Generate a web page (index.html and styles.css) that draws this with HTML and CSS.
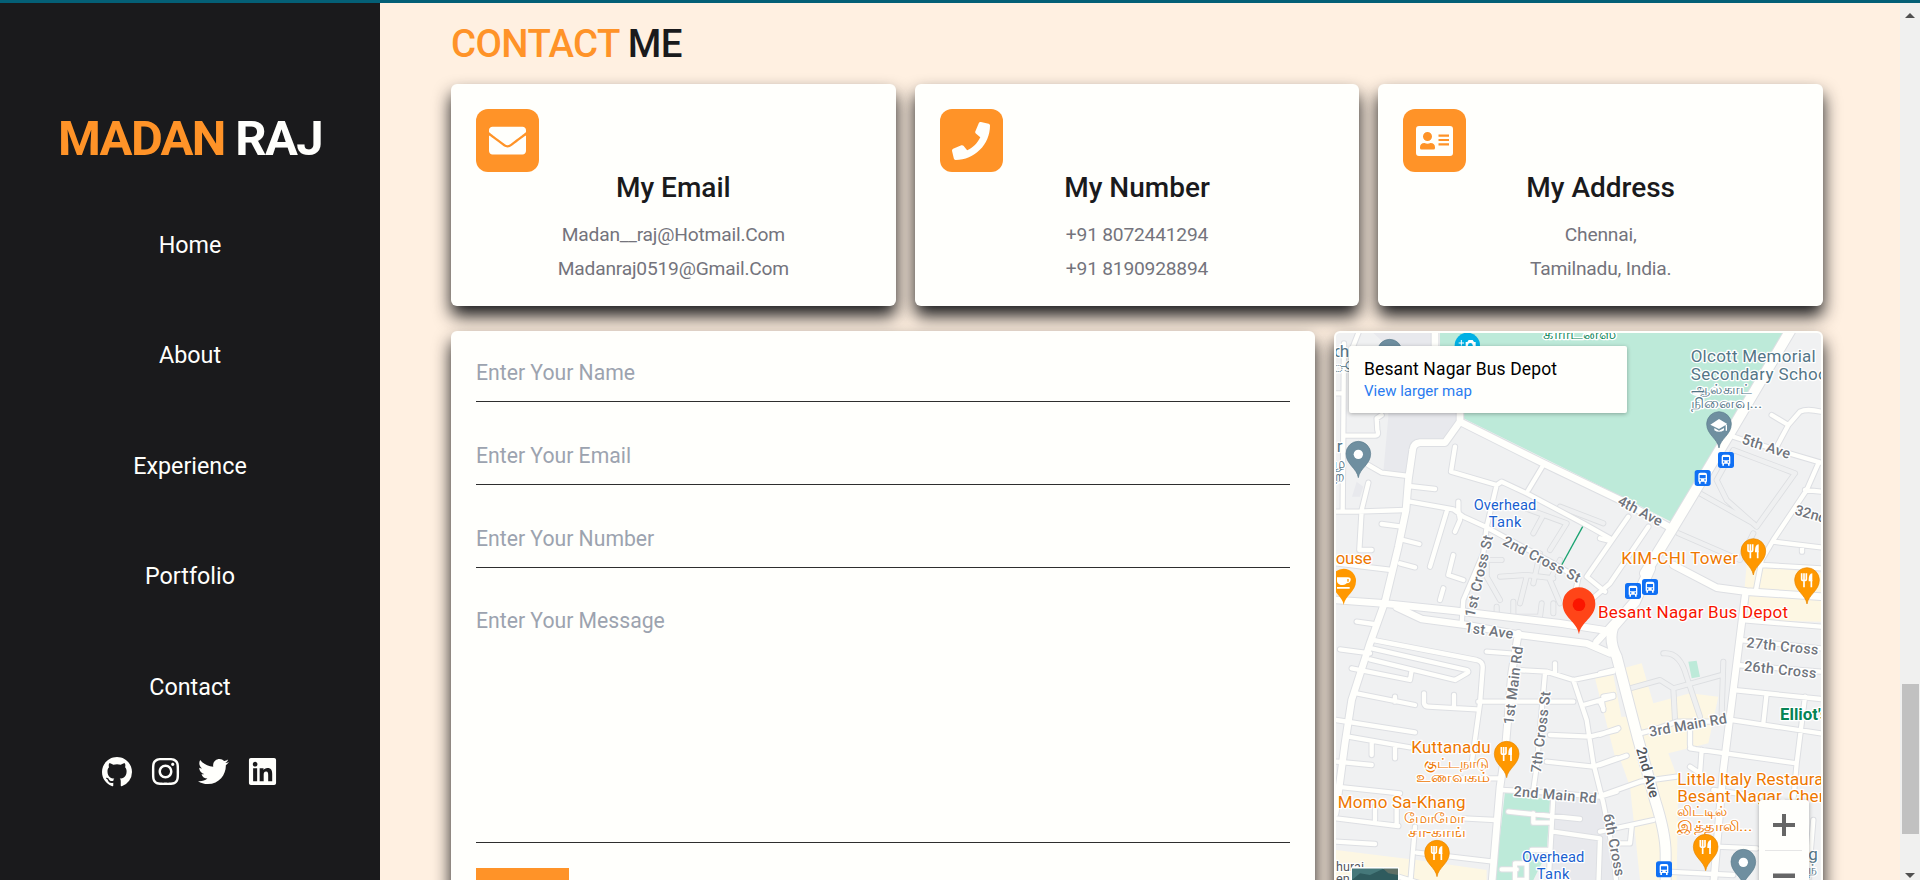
FILE: index.html
```html
<!DOCTYPE html>
<html lang="en">
<head>
<meta charset="utf-8">
<title>Madan Raj</title>
<link rel="stylesheet" href="styles.css">
</head>
<body>
<div class="page">
  <aside class="sidebar">
    <h1 class="logo"><span class="accent">MADAN</span> RAJ</h1>
    <nav class="nav">
      <a>Home</a><a>About</a><a>Experience</a><a>Portfolio</a><a>Contact</a>
    </nav>
    <div class="social">
      <svg width="30" height="30" viewBox="0 0 16 16"><path d="M8 0C3.58 0 0 3.58 0 8c0 3.54 2.29 6.53 5.47 7.59.4.07.55-.17.55-.38 0-.19-.01-.82-.01-1.49-2.01.37-2.53-.49-2.69-.94-.09-.23-.48-.94-.82-1.13-.28-.15-.68-.52-.01-.53.63-.01 1.08.58 1.23.82.72 1.21 1.87.87 2.33.66.07-.52.28-.87.51-1.07-1.78-.2-3.64-.89-3.64-3.95 0-.87.31-1.59.82-2.15-.08-.2-.36-1.02.08-2.12 0 0 .67-.21 2.2.82.64-.18 1.32-.27 2-.27s1.36.09 2 .27c1.53-1.04 2.2-.82 2.2-.82.44 1.1.16 1.92.08 2.12.51.56.82 1.27.82 2.15 0 3.07-1.87 3.75-3.65 3.95.29.25.54.73.54 1.48 0 1.07-.01 1.93-.01 2.2 0 .21.15.46.55.38A8.01 8.01 0 0 0 16 8c0-4.42-3.58-8-8-8z"/></svg>
      <svg width="31" height="31" viewBox="0 0 448 512"><path d="M224.100 141c-63.600 0-114.900 51.300-114.900 114.900s51.300 114.900 114.900 114.900S339 319.500 339 255.900 287.700 141 224.100 141zm0 189.600c-41.100 0-74.700-33.500-74.700-74.700s33.500-74.700 74.700-74.700 74.700 33.500 74.700 74.700-33.600 74.700-74.700 74.700zm146.400-194.300c0 14.900-12 26.800-26.800 26.800-14.900 0-26.800-12-26.800-26.800s12-26.800 26.800-26.800 26.800 12 26.800 26.800zm76.100 27.200c-1.700-35.900-9.900-67.700-36.200-93.900-26.200-26.200-58-34.400-93.900-36.200-37-2.100-147.900-2.100-184.900 0-35.800 1.700-67.600 9.900-93.900 36.100s-34.400 58-36.200 93.900c-2.100 37-2.100 147.900 0 184.900 1.700 35.900 9.900 67.700 36.200 93.900s58 34.400 93.900 36.200c37 2.100 147.900 2.100 184.900 0 35.900-1.700 67.700-9.900 93.900-36.200 26.200-26.200 34.400-58 36.200-93.900 2.100-37 2.100-147.800 0-184.800zM398.800 388c-7.800 19.600-22.900 34.700-42.600 42.600-29.500 11.700-99.500 9-132.100 9s-102.700 2.600-132.100-9c-19.600-7.800-34.700-22.900-42.600-42.600-11.700-29.500-9-99.500-9-132.100s-2.600-102.700 9-132.100c7.800-19.600 22.900-34.700 42.600-42.600 29.500-11.700 99.500-9 132.100-9s102.700-2.600 132.100 9c19.600 7.800 34.700 22.900 42.600 42.600 11.700 29.500 9 99.500 9 132.100s2.700 102.700-9 132.100z"/></svg>
      <svg width="31" height="31" viewBox="0 0 512 512"><path d="M459.370 151.716c.325 4.548.325 9.097.325 13.645 0 138.720-105.583 298.558-298.558 298.558-59.452 0-114.680-17.219-161.137-47.106 8.447.974 16.568 1.299 25.340 1.299 49.055 0 94.213-16.568 130.274-44.832-46.132-.975-84.792-31.188-98.112-72.772 6.498.974 12.995 1.624 19.818 1.624 9.421 0 18.843-1.300 27.614-3.573-48.081-9.747-84.143-51.980-84.143-102.985v-1.299c13.969 7.797 30.214 12.670 47.431 13.319-28.264-18.843-46.781-51.005-46.781-87.391 0-19.492 5.197-37.360 14.294-52.954 51.655 63.675 129.300 105.258 216.365 109.807-1.624-7.797-2.599-15.918-2.599-24.040 0-57.828 46.782-104.934 104.934-104.934 30.213 0 57.502 12.670 76.670 33.137 23.715-4.548 46.456-13.320 66.599-25.340-7.798 24.366-24.366 44.833-46.132 57.827 21.117-2.273 41.584-8.122 60.426-16.243-14.292 20.791-32.161 39.308-52.628 54.253z"/></svg>
      <svg width="31" height="31" viewBox="0 0 448 512"><path d="M416 32H31.900C14.300 32 0 46.500 0 64.300v383.400C0 465.500 14.300 480 31.900 480H416c17.600 0 32-14.500 32-32.300V64.300c0-17.800-14.400-32.300-32-32.300zM135.400 416H69V202.200h66.500V416zm-33.200-243c-21.300 0-38.500-17.300-38.500-38.500S80.900 96 102.200 96c21.200 0 38.500 17.300 38.500 38.500 0 21.300-17.200 38.500-38.500 38.500zm282.100 243h-66.400V312c0-24.800-.5-56.700-34.500-56.700-34.600 0-39.900 27-39.900 54.900V416h-66.400V202.200h63.700v29.200h.9c8.900-16.800 30.600-34.500 62.900-34.500 67.200 0 79.700 44.300 79.700 101.900V416z"/></svg>
    </div>
  </aside>

  <main class="contact">
    <h2 class="heading"><span class="accent">CONTACT</span> ME</h2>
    <div class="cards">
      <section class="card">
        <div class="badge"><svg width="37" height="37" viewBox="0 0 512 512"><path d="M502.300 190.800c3.900-3.100 9.700-.2 9.700 4.700V400c0 26.500-21.500 48-48 48H48c-26.500 0-48-21.500-48-48V195.600c0-5 5.700-7.800 9.700-4.700 22.400 17.400 52.100 39.500 154.100 113.600 21.100 15.400 56.700 47.800 92.200 47.600 35.700.3 72-32.800 92.300-47.600 102-74.100 131.600-96.300 154-113.700zM256 320c23.200.4 56.600-29.200 73.400-41.400 132.700-96.300 142.800-104.700 173.400-128.700 5.800-4.500 9.200-11.500 9.200-18.900v-19c0-26.500-21.500-48-48-48H48c-26.500 0-48 21.500-48 48v19c0 7.400 3.400 14.300 9.200 18.900 30.600 23.900 40.700 32.400 173.400 128.700 16.800 12.200 50.200 41.800 73.400 41.400z"/></svg></div>
        <h3>My Email</h3><p>Madan__raj@Hotmail.Com</p><p>Madanraj0519@Gmail.Com</p>
      </section>
      <section class="card">
        <div class="badge"><svg width="38" height="38" viewBox="0 0 512 512"><path d="M493.400 24.600l-104-24c-11.300-2.600-22.900 3.300-27.500 13.900l-48 112c-4.200 9.800-1.400 21.300 6.900 28l60.600 49.600c-36 76.700-98.900 140.500-177.200 177.200l-49.600-60.600c-6.800-8.300-18.200-11.100-28-6.900l-112 48C3.900 366.500-2 378.100.6 389.400l24 104C27.100 504.200 36.700 512 48 512c256.100 0 464-207.500 464-464 0-11.200-7.700-20.900-18.600-23.400z"/></svg></div>
        <h3>My Number</h3><p>+91 8072441294</p><p>+91 8190928894</p>
      </section>
      <section class="card">
        <div class="badge"><svg width="37" height="30" viewBox="0 0 37 30"><path fill-rule="evenodd" d="M3 0H34Q37 0 37 3V27Q37 30 34 30H3Q0 30 0 27V3Q0 0 3 0ZM11.500 6A4.500 4.500 0 1 0 11.500 15A4.500 4.500 0 1 0 11.500 6ZM4 21.500Q4 17 8.500 17Q11.500 18.500 14.500 17Q19 17 19 21.500V22Q19 23.500 17.500 23.500H5.500Q4 23.500 4 22ZM22.500 8.500V10.700H33V8.500ZM22.500 13V15H33V13ZM22.500 17.300V19.500H33V17.300Z"/></svg></div>
        <h3>My Address</h3><p>Chennai,</p><p>Tamilnadu, India.</p>
      </section>
    </div>

    <div class="lower">
      <form class="form">
        <input placeholder="Enter Your Name">
        <input placeholder="Enter Your Email">
        <input placeholder="Enter Your Number">
        <textarea placeholder="Enter Your Message"></textarea>
        <button type="button" class="send" aria-label="Send"></button>
      </form>

      <div class="map">
        <svg class="tiles" width="485" height="547" viewBox="48 39 1455 1641">
          <defs>
            <path id="lanes" d="M590 555L740 610L690 690M670 585L640 640M720 560L850 610M545 720H500V770L540 840M620 770L600 850M540 770L620 765L700 775M660 700L640 790M720 720L690 780L720 850M530 860V890M580 845V890H660L665 850M700 850V880M1190 480L1240 390L1425 460M1425 460L1310 620L1220 540M1190 480L1220 540M1075 640L1260 720L1300 640M1140 520L1300 610M930 1105L1020 1080L1060 1105L1205 1065M1060 1105L1065 1200M1030 1000Q1080 995 1100 1070L1140 1190M1210 1025L1205 1180"/>
            <path id="minor" d="M115 39L95 90M72 70L68 570M50 220H70M75 347H165Q178 347 172 330L170 295L185 285M145 435L185 458L265 468M145 488L125 570L118 690H155M48 575H110L255 570M185 612L245 620M265 498L345 507M250 660L298 672M240 730L285 742M48 730L215 750M270 545L400 568L430 590L500 622L560 655L700 730L775 775M405 380L393 455L530 495L545 485L620 520L790 610L870 655M670 435L625 510M530 495L500 620L490 700L430 840L425 910M415 545V570L420 600L405 635M380 575L330 740M400 705L385 765L430 780M370 805L360 840M925 590L800 770L855 815M985 620L870 790L790 860M775 775L760 840M840 655L870 663M1240 350L1270 360L1503 428M1355 285L1405 315L1370 380M1405 315L1440 275Q1460 265 1503 275M1495 430L1460 510L1360 660L1325 720L1308 810M1455 510L1503 515M1360 665L1503 682M1446 680V695M1325 735L1503 745M1265 900L1503 920M1260 960L1503 985M1250 1035L1503 1055M1240 1110L1503 1137M1235 1200L1503 1240M1110 1285L1430 1330M1340 1120L1330 1210M1455 1130L1430 1330L1420 1440M1110 1215V1275Q1110 1285 1125 1287M1145 1290L1140 1360L1110 1340M960 1240L1000 1230L1070 1205H1225M840 1428L960 1385L1070 1370M1180 1410L1320 1430M840 1535L1000 1500M935 1520L930 1570H880M840 1335L920 1307M840 1244L895 1225M850 1130L880 1125M850 1165L840 1145M840 1060L880 1050M1040 1655L1240 1665M1190 1580L1310 1585M1480 1500L1465 1680M110 905L160 912M160 960L470 1020Q490 1025 488 1045L480 1150L455 1330M155 985L440 1050Q450 1055 440 1060L405 1080L150 1018M95 1045L270 1080L275 1050M60 988L150 1000M110 1120L285 1155M225 1130V1145M312 1120V1150Q315 1160 325 1160L470 1168M402 1125V1160M475 1145L760 1145M48 1200L285 1237M85 1250L270 1282M155 1265V1305M225 1275V1315M50 1325L155 1335M48 1400L240 1420M48 1495L235 1518M165 1460V1500M230 1430V1515M48 1565L165 1572M430 1495L525 1500M285 1520L270 1700M290 1598L520 1625M235 1670L300 1690M370 1375H540M500 995L570 1000M590 1050L680 1055L760 1080L880 1055M705 1030V1060M675 1060L650 1340L640 1410M760 1080L800 1200L820 1330L850 1450L880 1600L890 1700M790 1155L880 1130M845 1140L850 1170M690 1245L810 1250L890 1230M680 1325L820 1340L890 1315M545 1410L640 1415L840 1430L890 1415M700 1430L685 1700M565 1475L780 1497M640 1480V1508H690M700 1535L840 1555L835 1700M635 1590H685M545 1648H590M585 1630H620V1680H585Z"/>
            <path id="major" d="M345 39V80M420 240V305L670 430L900 540L1055 625M420 305L375 368H300Q280 370 278 390L265 480L258 570L235 680L195 845L150 970L95 1140L75 1270L55 1420L45 1480M48 840L190 850L400 872L720 910L880 935M230 862L305 897L440 915L600 945L800 970L870 1000M890 900L830 965M595 940L575 1060L555 1300L540 1400L515 1700M1060 735L1190 803L1280 815L1503 830M1275 830L1240 1110L1210 1350L1180 1700"/>
            <path id="trunk" d="M1412 30L1235 330L1055 630L975 760M990 745L945 845L880 920Q865 960 890 1010L955 1260L1005 1440Q1037 1540 1037 1600V1700"/>
          </defs>
          <rect class="land" x="48" y="39" width="1455" height="1641"/>
          <path class="block" d="M160 39H340V80H420V290L375 358H290L262 465L190 455L205 290V80ZM110 485L130 500L120 530H96ZM690 1440L840 1430L880 1680H690Z"/>
          <path class="park" d="M360 39H1398L1225 330L1055 606L900 527L430 295L420 80H360ZM555 1415L690 1440L680 1600L640 1680H525ZM1105 1025L1130 1022L1140 1070L1115 1075Z"/>
          <path class="shops" d="M1280 735L1503 760V905L1265 900ZM825 1075L880 1065L925 1300L885 1310ZM890 1050L965 1030L1000 1150L1110 1120L1195 1130L1165 1270L1045 1300L1075 1380L1070 1680H960L930 1400L855 1190H920ZM48 1590L290 1620L500 1650V1680H48Z"/>
          <use href="#lanes" class="lane-edge"/><use href="#lanes" class="lane"/>
          <use href="#minor" class="minor edge"/><use href="#major" class="major edge"/><use href="#trunk" class="trunk edge"/>
          <use href="#minor" class="minor"/><use href="#major" class="major"/><use href="#trunk" class="trunk"/>
          <path class="trail" d="M788 620L725 735"/>

          <g class="street">
            <text transform="translate(545 673) rotate(27)" textLength="255">2nd Cross St</text>
            <text transform="translate(463 893) rotate(-77)" textLength="250">1st Cross St</text>
            <text transform="translate(890 552) rotate(28)" textLength="145">4th Ave</text>
            <text transform="translate(1263 370) rotate(18)" textLength="150">5th Ave</text>
            <text transform="translate(1422 583) rotate(16)">32nd</text>
            <text transform="translate(432 936) rotate(8)" textLength="147">1st Ave</text>
            <text transform="translate(580 1215) rotate(-83)" textLength="236">1st Main Rd</text>
            <text transform="translate(662 1360) rotate(-83)" textLength="246">7th Cross St</text>
            <text transform="translate(580 1428) rotate(5)" textLength="250">2nd Main Rd</text>
            <text transform="translate(990 1250) rotate(-10)" textLength="236">3rd Main Rd</text>
            <text class="dark" transform="translate(948 1287) rotate(74)" textLength="155">2nd Ave</text>
            <text transform="translate(850 1484) rotate(79)" textLength="190">6th Cross</text>
            <text transform="translate(1278 982) rotate(6)" textLength="217">27th Cross</text>
            <text transform="translate(1271 1052) rotate(6)" textLength="218">26th Cross</text>
          </g>

          <g class="place">
            <g class="slate">
              <text x="42" y="110" textLength="45">ch</text><text class="ta" x="40" y="155">ூல்</text>
              <text x="50" y="395">r</text><text class="ta" x="42" y="445">ழ</text><text class="ta" x="46" y="482">ற</text>
              <text x="1112" y="127" textLength="375">Olcott Memorial</text>
              <text x="1112" y="179" textLength="425">Secondary School</text>
              <text class="ta" x="1112" y="222" textLength="183" lengthAdjust="spacingAndGlyphs">ஆல்காட்</text>
              <text class="ta" x="1112" y="264" textLength="215" lengthAdjust="spacingAndGlyphs">நினைவு...</text>
              <text x="1465" y="1620">g</text><text class="ta" x="1465" y="1662">ந்</text>
            </g>
            <g class="green"><text class="ta" x="670" y="58" textLength="218" lengthAdjust="spacingAndGlyphs">கார்டன்ஸ்</text><text class="bold" x="1380" y="1200" textLength="146">Elliot's</text></g>
            <g class="blue"><text class="sm" x="461" y="571" textLength="188">Overhead</text><text class="sm" x="506" y="620" textLength="98">Tank</text>
              <text class="sm" x="606" y="1626" textLength="187">Overhead</text><text class="sm" x="650" y="1676" textLength="98">Tank</text></g>
            <g class="orange">
              <text x="47" y="731" textLength="108">ouse</text>
              <text x="904" y="732" textLength="350">KIM-CHI Tower</text>
              <text x="274" y="1300" textLength="238">Kuttanadu</text>
              <text class="ta" x="312" y="1343" textLength="198" lengthAdjust="spacingAndGlyphs">குட்டநாடு</text>
              <text class="ta" x="287" y="1385" textLength="223" lengthAdjust="spacingAndGlyphs">உணவகம்</text>
              <text x="53" y="1465" textLength="384">Momo Sa-Khang</text>
              <text class="ta" x="252" y="1508" textLength="182" lengthAdjust="spacingAndGlyphs">மோமோ</text>
              <text class="ta" x="264" y="1550" textLength="172" lengthAdjust="spacingAndGlyphs">சா-காங்</text>
              <text x="1072" y="1394" textLength="484">Little Italy Restaurant</text>
              <text x="1072" y="1447" textLength="522">Besant Nagar, Chennai</text>
              <text class="ta" x="1072" y="1488" textLength="152" lengthAdjust="spacingAndGlyphs">லிட்டில்</text>
              <text class="ta" x="1072" y="1532" textLength="225" lengthAdjust="spacingAndGlyphs">இத்தாலி...</text>
            </g>
            <g class="red"><text x="834" y="893" textLength="570">Besant Nagar Bus Depot</text></g>
            <g class="black"><text class="xs" x="48" y="1654" textLength="84">hurai</text><text class="xs" x="48" y="1690">en</text></g>
          </g>

          <defs>
            <path id="pin" d="M0 0C-4-28-37-40-37-72A37 37 0 0 1 37-72C37-40 4-28 0 0Z"/>
            <g id="food"><use href="#pin" fill="#ff9800" stroke="#e68600" stroke-width="2"/><path fill="none" stroke="#fff" stroke-width="5" d="M-16-92V-74Q-16-70-9-70Q-2-70-2-74V-92M-9-92V-50M13-50V-72"/><path fill="#fff" d="M5-72Q5-91 16-92V-68H5Z"/></g>
            <g id="dot"><use href="#pin" fill="#6f8fa0" stroke="#5b7c8d" stroke-width="2"/><circle cy="-70" r="14" fill="#fff"/></g>
            <g id="bus"><rect x="-24" y="-24" width="48" height="48" rx="8" fill="#1070f4"/><path fill="#fff" fill-rule="evenodd" d="M-13-10Q-13-16-7-16H7Q13-16 13-10V11H11V17H6V11H-6V17H-11V11H-13ZM-9-9V1H9V-9ZM-9 4V8H-5V4ZM5 4V8H9V4Z"/></g>
          </defs>
          <use href="#dot" x="209" y="167"/>
          <circle cx="442" cy="76" r="38" fill="#00b0e4"/><path fill="#fff" d="M437 66H442L446 60H458L462 66H467V90H415V80H437Z"/><path stroke="#fff" stroke-width="3" d="M424 60V77M416 69H432"/><circle cx="451" cy="76" r="7" fill="#00b0e4"/>
          <use href="#dot" x="115" y="473"/><use href="#dot" x="1270" y="1697"/>
          <use href="#pin" x="1197" y="384" fill="#6f8fa0" stroke="#5b7c8d" stroke-width="2"/><path fill="#fff" d="M1171 314L1197 297L1222 312L1197 327ZM1183 324L1197 332L1212 324V331Q1197 340 1183 331ZM1217 315H1221V332H1217Z"/>
          <use href="#bus" x="1218" y="420"/><use href="#bus" x="1148" y="474"/><use href="#bus" x="939" y="813"/><use href="#bus" x="990" y="801"/><use href="#bus" x="1032" y="1648"/>
          <use href="#food" x="1300" y="765"/><use href="#food" x="1461" y="852"/><use href="#food" x="560" y="1373"/><use href="#food" x="351" y="1670"/><use href="#food" x="1157" y="1652"/>
          <use href="#pin" x="71" y="855" fill="#ff9800"/><path fill="#fff" d="M51 772H83Q94 772 92 781Q90 790 80 790Q76 795 69 795H62Q52 792 51 784ZM51 801H89V806H51Z"/><path stroke="#ff9800" stroke-width="4" d="M84 777V785"/>
          <path fill="#ff4518" d="M777 943C772 905 728 893 728 851A49 49 0 0 1 826 851C826 893 782 905 777 943Z"/><circle cx="777" cy="854" r="19" fill="#fb1500"/>
          <rect x="92" y="1641" width="146" height="60" rx="6" fill="#fff"/><path fill="#2f5b5e" d="M96 1646H234V1680H96Z"/><path fill="#45787a" d="M96 1646H190L150 1665L120 1660L96 1680Z"/><path fill="#5e6f66" d="M190 1646H234V1665L205 1660Z"/>
        </svg>
        <div class="info"><strong>Besant Nagar Bus Depot</strong><a>View larger map</a></div>
        <div class="zoom"><svg width="50" height="80" viewBox="0 0 50 80"><path fill="#666" d="M14 23H23V14H27V23H36V27H27V36H23V27H14ZM14 73.500H36V78H14Z"/><path fill="#e6e6e6" d="M6 50H43V51H6Z"/></svg></div>
      </div>
    </div>
  </main>

  <div class="scrollbar"><i class="up"></i><i class="thumb"></i><i class="down"></i></div>
</div>
</body>
</html>
```
FILE: styles.css
```css
* { box-sizing: border-box; margin: 0; padding: 0; }
html, body { height: 880px; overflow: hidden; }
body { font-family: Roboto, "Liberation Sans", sans-serif; background: #fff0e1; color: #1a1a1c; }
.page { display: flex; height: 880px; border-top: 3px solid #045f76; }
.accent { color: #ff9328; }

.sidebar { flex: 0 0 380px; background: #1a1a1c; color: #fffffc; display: flex; flex-direction: column; align-items: center; padding-top: 104px; }
.logo { font-size: 49px; font-weight: 700; line-height: 64px; letter-spacing: -1.65px; white-space: nowrap; }
.nav { display: flex; flex-direction: column; align-items: center; gap: 80.4px; margin-top: 59px; }
.nav a { font-size: 23.300px; line-height: 30px; }
.social { display: flex; gap: 17.700px; margin-top: 54.5px; align-items: center; }
.social svg { fill: #fffffc; }

.contact { flex: 1; min-width: 0; height: 877px; overflow: hidden; padding: 16px 77px 0 71px; }
.heading { font-size: 38.400px; font-weight: 500; line-height: 50px; white-space: nowrap; letter-spacing: -.6px; }
.cards { display: grid; grid-template-columns: repeat(3, 1fr); gap: 19px; margin-top: 15px; }
.card, .form, .map { border-radius: 6px; background: #fffffc; box-shadow: 0 10px 17px #1a1a1c; }
.card { height: 222px; padding: 25px; text-align: center; }
.badge { width: 63px; height: 63px; border-radius: 12px; background: #ff9328; display: flex; align-items: center; justify-content: center; }
.badge svg { fill: #fffffc; }
.card h3 { font-size: 28px; font-weight: 500; line-height: 32px; }
.card p { font-size: 19.200px; line-height: 34px; color: #74747c; letter-spacing: -.2px; }
.card h3 + p { margin-top: 14px; }

.lower { display: flex; gap: 19px; margin-top: 25px; }
.form { flex: 0 0 864px; height: 620px; padding: 20px 25px; display: flex; flex-direction: column; align-items: stretch; }
.form input, .form textarea { font: 400 21.200px Roboto, "Liberation Sans", sans-serif; border: 0; border-bottom: 1px solid #2e2e2e; background: transparent; outline: 0; resize: none; border-radius: 0; }
.form input { height: 51px; padding-bottom: 8px; margin-bottom: 32px; }
.form input:nth-child(2) { margin-bottom: 32px; }
.form textarea { height: 243px; overflow: hidden; padding-top: 1px; line-height: 40px; }
.form ::placeholder { color: #9ca3af; opacity: 1; }
.send { align-self: flex-start; width: 93px; height: 50px; margin-top: 25px; border: 0; background: #ff9328; }

.map { position: relative; flex: 1; height: 620px; padding: 2px; }
.tiles { display: block; border-radius: 4px 4px 0 0; overflow: hidden; }
.info { position: absolute; left: 15px; top: 15px; width: 278px; height: 67px; padding: 11px 15px; background: #fffffc; border-radius: 2px; box-shadow: 0 1px 4px rgba(0, 0, 0, .3); display: flex; flex-direction: column; }
.info strong { font-size: 17.500px; font-weight: 400; line-height: 24px; color: #000; white-space: nowrap; letter-spacing: .13px; }
.info a { font-size: 15px; line-height: 20px; color: #2a7bf0; }
.zoom { position: absolute; left: 425px; top: 469px; width: 50px; height: 110px; background: #fffffc; border-radius: 3px; box-shadow: 0 1px 4px rgba(0, 0, 0, .3); }

.land { fill: #f0f1f2; }
.block { fill: #e8e9ed; }
.park { fill: #bdead9; }
.shops { fill: #fdf7e3; }
.lane-edge, .lane, .minor, .major, .trunk { fill: none; stroke: #fffffc; stroke-linejoin: round; stroke-linecap: round; }
.lane-edge { stroke: #dcdee1; stroke-width: 18px; }
.lane { stroke: #eff0f1; stroke-width: 13px; }
.minor { stroke-width: 13px; }
.major { stroke-width: 20px; }
.trunk { stroke-width: 30px; }
.minor.edge { stroke: #dddfe3; stroke-width: 19px; }
.major.edge { stroke: #dddfe3; stroke-width: 26px; }
.trunk.edge { stroke: #dddfe3; stroke-width: 36px; }
.trail { stroke: #1aa371; stroke-width: 4px; }
.tiles text { font-family: Roboto, "Liberation Sans", sans-serif; font-size: 51px; stroke: #fff; stroke-width: 8px; paint-order: stroke; stroke-linejoin: round; }
.tiles .street text { font-size: 43px; font-weight: 500; fill: #70757d; }
.tiles .street .dark { fill: #50555c; }
.tiles .sm { font-size: 44px; }
.tiles .xs { font-size: 38px; }
.tiles .ta { font-size: 43px; }
.tiles .bold { font-weight: 700; }
.slate { fill: #547687; }
.green { fill: #078455; }
.blue { fill: #1a5fd0; }
.orange { fill: #ee7700; }
.red { fill: #f81600; }
.black { fill: #55585d; }

.scrollbar { flex: 0 0 20px; background: #f0f0ef; display: flex; flex-direction: column; align-items: center; padding-top: 9px; }
.thumb { width: 17px; height: 150px; background: #c1c1c1; margin-top: 666px; }
.up, .down { border: 5px solid transparent; width: 0; height: 0; }
.up { border-top: 0; border-bottom-color: #505050; height: 6px; }
.down { border-bottom: 0; border-top-color: #505050; margin-top: 39px; }
```
